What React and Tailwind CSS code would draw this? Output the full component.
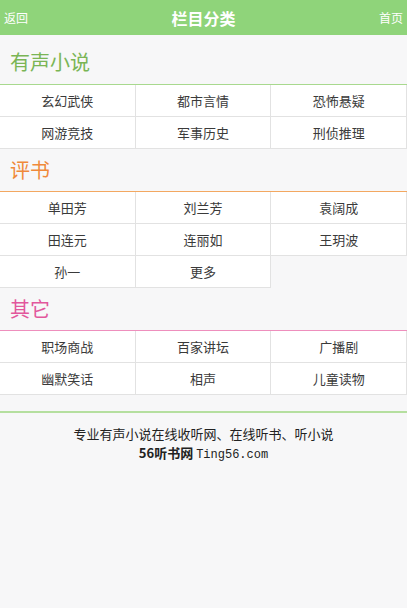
import React from 'react';

const sections = [
  {
    title: '有声小说',
    color: 'text-[#7ab555]',
    line: 'border-[#a8d98e]',
    items: ['玄幻武侠', '都市言情', '恐怖悬疑', '网游竞技', '军事历史', '刑侦推理'],
  },
  {
    title: '评书',
    color: 'text-[#f0893a]',
    line: 'border-[#f3a861]',
    items: ['单田芳', '刘兰芳', '袁阔成', '田连元', '连丽如', '王玥波', '孙一', '更多'],
  },
  {
    title: '其它',
    color: 'text-[#e2579c]',
    line: 'border-[#ee8fbd]',
    items: ['职场商战', '百家讲坛', '广播剧', '幽默笑话', '相声', '儿童读物'],
  },
];

const font = { fontFamily: '"Noto Sans CJK SC", "Liberation Sans", sans-serif' };

const Section = ({ title, color, line, items, first }) => (
  <div>
    <h2
      className={`${first ? 'pt-[14px] h-[50px]' : 'pt-[8px] h-[43px]'} pl-[10px] text-[20px] leading-[26px] font-normal border-b ${line} ${color}`}
    >
      {title}
    </h2>
    <div className="grid grid-cols-3">
      {items.map((name) => (
        <a
          key={name}
          href="#"
          className="h-8 flex items-center justify-center bg-white border-r border-b border-[#e2e2e2] text-[13px] text-[#3a3a3a]"
        >
          {name}
        </a>
      ))}
    </div>
  </div>
);

export default function App() {
  return (
    <div className="w-[407px] min-h-[608px] bg-[#f7f7f8]" style={font}>
      <header className="h-[35px] bg-[#8fd47a] flex items-center justify-between px-[4px] relative">
        <a href="#" className="text-[12px] text-white">返回</a>
        <h1 className="absolute left-0 right-0 text-center text-[16px] font-bold text-white pointer-events-none">
          栏目分类
        </h1>
        <a href="#" className="text-[12px] text-white">首页</a>
      </header>

      {sections.map((s, i) => (
        <Section key={s.title} {...s} first={i === 0} />
      ))}

      <footer className="mt-[16px] border-t-2 border-[#b5df9f] pt-[11px] text-center text-[13px] text-[#222] leading-[19px]">
        <p>专业有声小说在线收听网、在线听书、听小说</p>
        <p>
          <b className="font-bold">56听书网</b>{' '}
          <span style={{ fontFamily: '"Liberation Mono", monospace' }} className="text-[12px]">Ting56.com</span>
        </p>
      </footer>
    </div>
  );
}
